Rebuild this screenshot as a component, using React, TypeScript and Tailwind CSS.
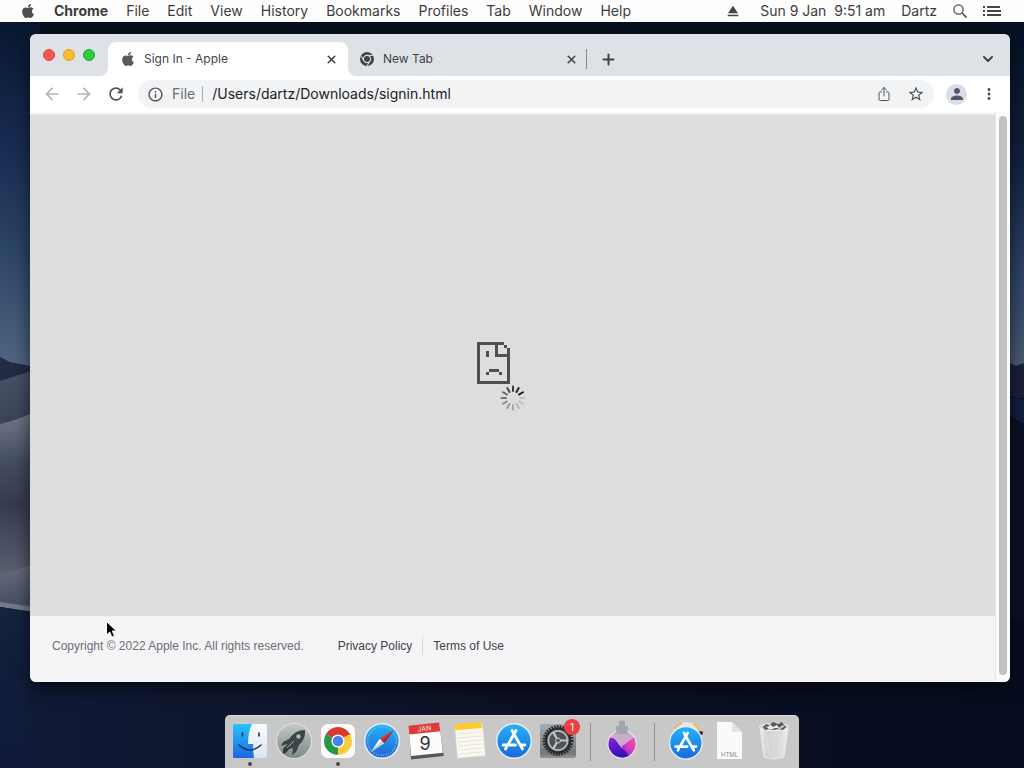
import React from "react";
import { FaApple } from "react-icons/fa";
import { IoShareOutline } from "react-icons/io5";
import { ChevronDown, Plus, X } from "lucide-react";
import {
  MdArrowBack,
  MdArrowForward,
  MdEject,
  MdInfoOutline,
  MdMoreVert,
  MdPerson,
  MdRefresh,
  MdStarBorder,
} from "react-icons/md";

const menus = ["File", "Edit", "View", "History", "Bookmarks", "Profiles", "Tab", "Window", "Help"];

function Wallpaper() {
  return (
    <svg className="absolute inset-0 h-full w-full" viewBox="0 0 1024 768" preserveAspectRatio="none" aria-hidden="true">
      <defs>
        <linearGradient id="skyL" x1="0" y1="0" x2="0" y2="1">
          <stop offset="0" stopColor="#091730" />
          <stop offset="0.35" stopColor="#182b51" />
          <stop offset="0.65" stopColor="#2c4465" />
          <stop offset="1" stopColor="#526783" />
        </linearGradient>
        <linearGradient id="skyR" x1="0" y1="0" x2="0" y2="1">
          <stop offset="0" stopColor="#061022" />
          <stop offset="0.4" stopColor="#12223f" />
          <stop offset="0.75" stopColor="#304669" />
          <stop offset="1" stopColor="#4c5c71" />
        </linearGradient>
        <linearGradient id="dune1" x1="0" y1="0" x2="0" y2="1">
          <stop offset="0" stopColor="#4a5368" />
          <stop offset="1" stopColor="#363d52" />
        </linearGradient>
        <linearGradient id="dune2" x1="0" y1="0" x2="0" y2="1">
          <stop offset="0" stopColor="#727a8b" />
          <stop offset="0.3" stopColor="#444c60" />
          <stop offset="0.55" stopColor="#373b50" />
          <stop offset="1" stopColor="#5c6274" />
        </linearGradient>
        <linearGradient id="dune3" x1="0" y1="0" x2="0" y2="1">
          <stop offset="0" stopColor="#666c7c" />
          <stop offset="1" stopColor="#414960" />
        </linearGradient>
        <linearGradient id="ground" x1="0" y1="0" x2="0" y2="1">
          <stop offset="0" stopColor="#14233f" />
          <stop offset="0.5" stopColor="#111d3a" />
          <stop offset="1" stopColor="#10193a" />
        </linearGradient>
        <linearGradient id="floor" x1="0" y1="0" x2="1" y2="0">
          <stop offset="0" stopColor="#101a35" />
          <stop offset="0.5" stopColor="#0c1024" />
          <stop offset="1" stopColor="#060d20" />
        </linearGradient>
      </defs>
      <rect width="1024" height="768" fill="#07101f" />
      <rect y="22" width="40" height="350" fill="url(#skyL)" />
      <path d="M0 357 L10 362 L30 366 V390 H0 Z" fill="#242b45" />
      <path d="M0 381 Q16 376 34 370 V440 H0 Z" fill="url(#dune1)" />
      <path d="M0 424 Q18 420 34 412 V580 H0 Z" fill="url(#dune2)" />
      <path d="M0 574 L34 565 V614 L0 606 Z" fill="url(#dune3)" />
      <path d="M0 602 L34 607 V612 L0 607 Z" fill="#737b89" />
      <path d="M0 607 L34 612 V768 H0 Z" fill="url(#ground)" />
      <rect x="1000" y="22" width="24" height="350" fill="url(#skyR)" />
      <path d="M1000 358 L1016 366 L1024 363 V410 H1000 Z" fill="#1a203c" />
      <path d="M1000 392 Q1012 399 1024 398 V700 H1000 Z" fill="#0a1024" />
      <path d="M1000 396 L1024 400 V424 L1000 410 Z" fill="#141d40" />
      <rect y="620" x="30" width="994" height="148" fill="url(#floor)" />
    </svg>
  );
}

function MenuBar() {
  return (
    <header className="relative flex h-[22px] items-center justify-between bg-[#fdfdfd] pr-[22px] pl-5 text-sm text-[#3c3c3c]">
      <nav className="flex items-center gap-[18px] leading-[22px]">
        <button aria-label="Apple menu" className="text-[#505050]">
          <FaApple size={16} />
        </button>
        <button className="font-bold">Chrome</button>
        {menus.map((m) => (
          <button key={m}>{m}</button>
        ))}
      </nav>
      <div className="flex items-center gap-4 leading-[22px]">
        <button aria-label="Eject" className="text-[#454545]">
          <MdEject size={18} />
        </button>
        <span className="ml-[2px] whitespace-pre">Sun 9 Jan  9:51 am</span>
        <button>Dartz</button>
        <button aria-label="Search">
          <svg width="14" height="14" viewBox="0 0 14 14" fill="none" stroke="#505050" strokeWidth="1.3">
            <circle cx="5.5" cy="5.5" r="4.6" />
            <path d="M9 9l4.6 4.6" strokeWidth="1.6" />
          </svg>
        </button>
        <button aria-label="Notification Centre">
          <svg width="19" height="12" viewBox="0 0 19 12" fill="#454545" shapeRendering="crispEdges">
            <path d="M0 1h2v2H0zM4 1h13v2H4zM0 5h2v2H0zM4 5h14v2H4zM0 9h2v2H0zM4 9h14v2H4z" />
          </svg>
        </button>
      </div>
    </header>
  );
}

function ChromeFavicon() {
  return (
    <svg width="14" height="14" viewBox="0 0 14 14" aria-hidden="true">
      <circle cx="7" cy="7" r="7" fill="#414549" />
      <circle cx="7" cy="7" r="3.600" fill="none" stroke="#dee1e6" strokeWidth="1.100" />
      <path d="M7 3.400h6.300M10.100 8.800L7 14M3.900 8.800L.8 3.600" stroke="#dee1e6" strokeWidth="1" />
    </svg>
  );
}

function TabStrip() {
  return (
    <div className="flex h-[42px] items-end rounded-t-md bg-[#dee1e6] text-xs text-[#3f4347]">
      <div className="flex h-[42px] w-[78px] shrink-0 items-center gap-2 pl-[13px]">
        <button aria-label="Close window" className="h-3 w-3 rounded-full border border-[#e0443e] bg-[#fb5550]" />
        <button aria-label="Minimise window" className="h-3 w-3 rounded-full border border-[#dea123] bg-[#f6bd2d]" />
        <button aria-label="Zoom window" className="h-3 w-3 rounded-full border border-[#1aab29] bg-[#2bcb42]" />
      </div>
      <div className="relative flex h-[34px] w-60 items-center rounded-t-lg bg-white pr-[10px] pl-3">
        <svg className="absolute bottom-0 -left-2" width="8" height="8" aria-hidden="true">
          <path d="M8 0v8H0a8 8 0 0 0 8-8z" fill="#fff" />
        </svg>
        <svg className="absolute -right-2 bottom-0" width="8" height="8" aria-hidden="true">
          <path d="M0 0v8h8a8 8 0 0 1-8-8z" fill="#fff" />
        </svg>
        <FaApple size={16} className="text-[#5a5a5c]" />
        <button className="ml-2 flex-1 text-left">Sign In - Apple</button>
        <button aria-label="Close Sign In - Apple">
          <X size={13} strokeWidth={3} />
        </button>
      </div>
      <div className="flex h-[34px] w-60 items-center pr-[10px] pl-3">
        <ChromeFavicon />
        <button className="ml-[9px] flex-1 text-left">New Tab</button>
        <button aria-label="Close New Tab">
          <X size={13} strokeWidth={3} />
        </button>
      </div>
      <div className="mb-[7px] -ml-[2px] h-5 w-px bg-[#85898e]" />
      <button aria-label="New tab" className="ml-[13px] flex h-[34px] items-center">
        <Plus size={17} strokeWidth={2.8} />
      </button>
      <button aria-label="Search tabs" className="mr-[14px] ml-auto flex h-[34px] items-center">
        <ChevronDown size={16} strokeWidth={3} />
      </button>
    </div>
  );
}

function Toolbar() {
  return (
    <div className="flex h-9 items-center bg-white pr-3 pl-3 text-[#505458]">
      <div className="flex w-24 shrink-0 items-center gap-3">
        <button aria-label="Back" className="text-[#b5b7b9]">
          <MdArrowBack size={20} />
        </button>
        <button aria-label="Forward" className="text-[#b5b7b9]">
          <MdArrowForward size={20} />
        </button>
        <button aria-label="Reload">
          <MdRefresh size={20} />
        </button>
      </div>
      <div className="flex h-7 flex-1 items-center rounded-full bg-[#f1f3f4] px-[9px] text-sm">
        <MdInfoOutline size={17} />
        <label htmlFor="address" className="ml-2 text-[#6b6f73]">
          File
        </label>
        <span className="ml-[7px] h-4 w-px bg-[#a9acb0]" />
        <input
          id="address"
          defaultValue="/Users/dartz/Downloads/signin.html"
          className="ml-[9px] min-w-0 flex-1 bg-transparent text-[#202124] outline-none"
        />
        <button aria-label="Share">
          <IoShareOutline size={16} />
        </button>
        <button aria-label="Bookmark this page" className="ml-[15px]">
          <MdStarBorder size={18} />
        </button>
      </div>
      <button
        aria-label="Profile"
        className="ml-3 flex h-[21px] w-[21px] items-center justify-center rounded-full bg-[#dadde6] text-[#50566a]"
      >
        <MdPerson size={18} />
      </button>
      <button aria-label="Chrome menu" className="ml-[13px]">
        <MdMoreVert size={18} />
      </button>
    </div>
  );
}

function SadPage() {
  return (
    <svg width="33" height="42" viewBox="0 0 33 42" fill="#4f4f4f" shapeRendering="crispEdges" role="img" aria-label="Page failed to load">
      <path d="M0 0h27v3H3v36h27V6h3v36H0z" />
      <path d="M18 3h3v9h9v3H18zM27 3h3v3h-3zM9 9h3v6H9zM12 27h10v3H12zM9 30h3v3H9zM22 30h3v3h-3z" />
    </svg>
  );
}

const spokes = [0.8, 0.9, 1, 0.12, 0.14, 0.2, 0.26, 0.32, 0.4, 0.5, 0.6, 0.72];

function Spinner() {
  return (
    <svg className="absolute top-[43px] left-[23px]" width="26" height="26" viewBox="-13 -13 26 26" stroke="#111" strokeWidth="2" strokeLinecap="round" aria-label="Loading">
      {spokes.map((o, i) => (
        <path key={i} d="M0-7V-11.5" opacity={o} transform={`rotate(${i * 30})`} />
      ))}
    </svg>
  );
}

function BrowserWindow() {
  return (
    <main className="relative mt-3 mr-[14px] mb-[33px] ml-[30px] flex flex-1 flex-col overflow-hidden rounded-md bg-white shadow-[0_6px_18px_rgba(0,0,0,0.6)]">
      <TabStrip />
      <Toolbar />
      <div className="flex flex-1">
        <div className="flex flex-1 flex-col">
          <section className="flex flex-1 items-center justify-center bg-linear-to-b from-white to-[#dddddd] to-[4px] pb-[2px]">
            <div className="relative mr-[39px]">
              <SadPage />
              <Spinner />
            </div>
          </section>
          <footer className="flex h-[66px] items-center bg-[#f5f5f7] pb-[6px] pl-[22px] font-['Liberation_Sans',sans-serif] text-[12px] text-[#6e6e73]">
            <span>Copyright © 2022 Apple Inc. All rights reserved.</span>
            <a href="#privacy" className="ml-[34px] border-r border-[#d6d6da] pr-[10px] text-[#424245]">
              Privacy Policy
            </a>
            <a href="#terms" className="ml-[10px] text-[#424245]">
              Terms of Use
            </a>
          </footer>
        </div>
        <div className="flex w-[15px] border-l border-[#e8e8e8] bg-[#fbfbfb] pt-1 pb-[7px] pl-[3px]">
          <div className="w-2 rounded-full bg-[#c1c2c2]" />
        </div>
      </div>
    </main>
  );
}

function Finder() {
  return (
    <svg width="36" height="36" viewBox="0 0 36 36">
      <defs>
        <linearGradient id="fi" x1="0" y1="0" x2="0" y2="1">
          <stop offset="0" stopColor="#29c4fb" />
          <stop offset="1" stopColor="#1b67e0" />
        </linearGradient>
        <linearGradient id="fw" x1="0" y1="0" x2="0" y2="1">
          <stop offset="0" stopColor="#fafbfd" />
          <stop offset="1" stopColor="#dbe4f2" />
        </linearGradient>
      </defs>
      <rect x="1" y="1" width="34" height="34" rx="1" fill="url(#fi)" />
      <path d="M20 1h14a1 1 0 0 1 1 1v32a1 1 0 0 1-1 1H22q-1-6-.8-14H16Q16 9 20 1z" fill="url(#fw)" />
      <path d="M10.500 10v3M27 10v3" stroke="#163252" strokeWidth="1.6" strokeLinecap="round" />
      <path d="M7 22q11 10 22 0" fill="none" stroke="#173250" strokeWidth="1.5" strokeLinecap="round" />
    </svg>
  );
}

function Launchpad() {
  return (
    <svg width="38" height="38" viewBox="0 0 38 38">
      <defs>
        <linearGradient id="lp" x1="0" y1="0" x2="0" y2="1">
          <stop offset="0" stopColor="#c2cac9" />
          <stop offset="1" stopColor="#7c8888" />
        </linearGradient>
      </defs>
      <circle cx="19" cy="19" r="17.500" fill="url(#lp)" stroke="#dce0df" strokeWidth="1.200" />
      <path d="M30 8Q20 8 14 17L8 20l-2 4 7-2 5 5-1 6 4-3 3-7Q31 17 30 8z" fill="#3b4546" />
      <circle cx="23.500" cy="14.500" r="2.200" fill="#aeb8b7" />
      <path d="M11 24q-4 2-3 8 4-1 6-5l3-1-4-4z" fill="#2f393a" />
      <path d="M12 26l7-7" stroke="#aab3b3" />
    </svg>
  );
}

function ChromeIcon() {
  return (
    <svg width="36" height="36" viewBox="0 0 36 36">
      <rect x="1" y="1" width="34" height="34" rx="7" fill="#fbfbfb" />
      <path d="M18 18L5.880 11A14 14 0 0 1 30.120 11z" fill="#d93a2f" />
      <path d="M18 18L30.120 11A14 14 0 0 1 18 32z" fill="#fbcb36" />
      <path d="M18 18V32A14 14 0 0 1 5.880 11z" fill="#27984a" />
      <path d="M18 11.500h12.400l-.3-.5L18 10z" fill="#d93a2f" />
      <path d="M23.600 21.250L17.400 32h.6l8-8z" fill="#fbcb36" />
      <path d="M12.400 21.250L6 10.800l-.3.700 3 9z" fill="#27984a" />
      <circle cx="18" cy="18" r="6.600" fill="#fff" />
      <circle cx="18" cy="18" r="5.200" fill="#4a80eb" />
    </svg>
  );
}

function Safari() {
  return (
    <svg width="38" height="38" viewBox="0 0 38 38">
      <defs>
        <linearGradient id="sf" x1="0" y1="0" x2="0" y2="1">
          <stop offset="0" stopColor="#21b6f5" />
          <stop offset="1" stopColor="#2465d6" />
        </linearGradient>
      </defs>
      <circle cx="19" cy="19" r="17.300" fill="url(#sf)" stroke="#e9edf0" strokeWidth="1.500" />
      <circle cx="19" cy="19" r="14.300" fill="none" stroke="#9fd6f8" strokeWidth="1.500" strokeDasharray="0.7 1.8" />
      <path d="M31 8L16.700 16.700 19 19z" fill="#ed302b" />
      <path d="M31 8L19 19l2.300 2.300z" fill="#b31e2c" />
      <path d="M8 30l8.700-13.300L19 19z" fill="#fff" />
      <path d="M8 30l11-11 2.300 2.300z" fill="#d2d8df" />
    </svg>
  );
}

function Calendar() {
  return (
    <svg width="38" height="38" viewBox="0 0 38 38">
      <g transform="rotate(-6 18 18)">
        <path d="M3 10L2 36h33l-1-26z" fill="#55575a" />
        <path d="M3 3h31l.5 29.500h-32z" fill="#fcfcfc" />
        <path d="M3 2h31v9H3z" fill="#dc3b3a" />
        <text x="18.500" y="9" fontSize="7" textAnchor="middle" fill="#fbe4e4" fontFamily="Inter, sans-serif">JAN</text>
      </g>
      <text x="18" y="28" fontSize="18" textAnchor="middle" fill="#303030" fontFamily="Inter, sans-serif">9</text>
    </svg>
  );
}

function Notes() {
  return (
    <svg width="38" height="38" viewBox="0 0 38 38">
      <g transform="rotate(-5 19 19)">
        <rect x="5" y="2" width="28" height="33" fill="#fbf9ef" stroke="#d8d5c9" strokeWidth="0.600" />
        <path d="M5 1h27v6H5z" fill="#fccd2c" />
        <path d="M7 11h24M7 15h24M7 19h24M7 23h24M7 27h24M7 31h24" stroke="#e4e0d5" strokeWidth="0.800" />
      </g>
    </svg>
  );
}

function AppStoreGlyph() {
  return (
    <g fill="none" stroke="#fff" strokeWidth="2.800" strokeLinecap="round">
      <path d="M17 8.500l10.500 18.500M21 8.500L13 22.500M11.500 25.200l-1 1.800" />
      <path d="M8 23h12.500M26 23h4" />
    </g>
  );
}

function AppStore({ download = false }: { download?: boolean }) {
  return (
    <svg width="38" height="38" viewBox="0 0 38 38">
      <defs>
        <linearGradient id="as" x1="0" y1="0" x2="0" y2="1">
          <stop offset="0" stopColor="#24b3f8" />
          <stop offset="1" stopColor="#1968dc" />
        </linearGradient>
      </defs>
      {download && (
        <g>
          <path d="M6 7Q10 0 19 0t13 7l-4 5H8z" fill="#efe6da" />
          <path d="M7 7Q10 3 15 1" stroke="#efa45b" strokeWidth="1.500" fill="none" />
          <path d="M26 2q5 2 6 7" stroke="#e8c24d" strokeWidth="2" fill="none" />
          <circle cx="34" cy="11" r="2" fill="#3d3333" />
        </g>
      )}
      <g transform={download ? "translate(1 3) scale(0.940)" : undefined}>
        <circle cx="19" cy="19" r="17.300" fill="url(#as)" stroke="#e6edf4" strokeWidth="1.500" />
        <AppStoreGlyph />
      </g>
    </svg>
  );
}

function Settings() {
  return (
    <svg width="38" height="38" viewBox="0 0 38 38">
      <defs>
        <linearGradient id="st" x1="0" y1="0" x2="0" y2="1">
          <stop offset="0" stopColor="#a7abad" />
          <stop offset="0.850" stopColor="#73777a" />
          <stop offset="1" stopColor="#92969a" />
        </linearGradient>
      </defs>
      <rect x="1" y="2" width="36" height="34" rx="2" fill="url(#st)" />
      <circle cx="19" cy="18.500" r="14" fill="none" stroke="#292c2e" strokeWidth="3" strokeDasharray="1.700 1.100" />
      <circle cx="19" cy="18.500" r="12" fill="#8d9193" stroke="#292c2e" strokeWidth="2.500" />
      <circle cx="19" cy="18.500" r="9.500" fill="#4e5254" stroke="#b8bdbf" strokeWidth="1.500" />
      <path d="M19 18.500h9.500M19 18.500l-4.700-8.200M19 18.500l-4.700 8.200" stroke="#c3c8ca" strokeWidth="2.200" />
      <circle cx="19" cy="18.500" r="2.500" fill="#5a5f61" stroke="#c3c8ca" />
    </svg>
  );
}

function Monterey() {
  return (
    <svg width="38" height="44" viewBox="0 0 38 44">
      <defs>
        <linearGradient id="ms" x1="0" y1="0" x2="1" y2="1">
          <stop offset="0" stopColor="#b9aecb" />
          <stop offset="1" stopColor="#e5a6cf" />
        </linearGradient>
        <linearGradient id="mp" x1="0" y1="0" x2="0.4" y2="1">
          <stop offset="0" stopColor="#8d22c4" />
          <stop offset="0.5" stopColor="#5a18d0" />
          <stop offset="1" stopColor="#3012a8" />
        </linearGradient>
        <linearGradient id="mr" x1="1" y1="0" x2="0.2" y2="1">
          <stop offset="0" stopColor="#f0569c" />
          <stop offset="0.6" stopColor="#d63cc0" />
          <stop offset="1" stopColor="#6a1fd8" />
        </linearGradient>
        <clipPath id="mc">
          <circle cx="19" cy="25" r="13.500" />
        </clipPath>
      </defs>
      <circle cx="19" cy="25" r="14.500" fill="#ecebf1" />
      <g clipPath="url(#mc)">
        <rect x="5" y="11" width="28" height="28" fill="url(#ms)" />
        <path d="M19 27L33 17v22H19z" fill="url(#mr)" />
        <path d="M5 19q6-1 9 4 4 6 9 10l5 7H5z" fill="url(#mp)" />
      </g>
      <path d="M16 2q3-1 6 0v5h3v5l-2 3h-8l-2-3V7h3z" fill="#a0a7ad" />
    </svg>
  );
}

function HtmlFile() {
  return (
    <svg width="28" height="38" viewBox="0 0 28 38">
      <path d="M1 0h15l10 10v27H1z" fill="#fafafa" />
      <path d="M16 0q1 7-1 10 6-1 11 0z" fill="#e2e2e2" />
      <text x="13.500" y="34.500" fontSize="6" textAnchor="middle" fill="#8a8a8a" fontFamily="Inter, sans-serif">HTML</text>
    </svg>
  );
}

function Trash() {
  return (
    <svg width="34" height="40" viewBox="0 0 34 40">
      <defs>
        <linearGradient id="tr" x1="0" y1="0" x2="1" y2="0">
          <stop offset="0" stopColor="#efefef" />
          <stop offset="0.250" stopColor="#d3d3d3" />
          <stop offset="0.750" stopColor="#dcdcdc" />
          <stop offset="1" stopColor="#f2f2f2" />
        </linearGradient>
      </defs>
      <path d="M3 7l4 29q10 4 20 0l4-29z" fill="url(#tr)" stroke="#eeeeee" strokeWidth="0.800" />
      <ellipse cx="17" cy="6" rx="14.500" ry="3.500" fill="#c9c9c9" stroke="#f6f6f6" />
      <path d="M6 6l3-3 3 1 4-3 5 2 4-2 2 3 2 2-3 3-5-1-4 1-5-1-4 1z" fill="#5a5a5a" />
      <path d="M8 5l3 1 2-3 3 3 4-2 2 3 4-3 1 2-4 1-5 0-6 1zM12 8l3-1 3 1zM20 8l3-1 2 1z" fill="#ececec" />
      <path d="M10 16l2 17M24 16l-2 17" stroke="#ececec" strokeWidth="1.200" opacity="0.500" />
    </svg>
  );
}

function DockItem({ name, running, badge, children }: { name: string; running?: boolean; badge?: string; children: React.ReactNode }) {
  return (
    <button aria-label={name} className="relative flex h-[52px] w-11 items-center justify-center pb-[2px]">
      {children}
      {badge && (
        <span className="absolute top-[3px] right-0 flex h-4 w-4 items-center justify-center rounded-full bg-[#ed3f40] text-[10px] text-white">
          {badge}
        </span>
      )}
      {running && <span className="absolute bottom-[2px] h-1 w-1 rounded-full bg-[#484848]" />}
    </button>
  );
}

function Divider() {
  return (
    <div className="flex w-5 justify-center">
      <div className="h-[38px] w-px bg-[#8f8f8f]" />
    </div>
  );
}

function Dock() {
  return (
    <nav aria-label="Dock" className="relative mx-auto flex items-center rounded-t-[5px] border-t border-[#dadada] bg-[#c8c8c9] px-[3px]">
      <DockItem name="Finder" running><Finder /></DockItem>
      <DockItem name="Launchpad"><Launchpad /></DockItem>
      <DockItem name="Google Chrome" running><ChromeIcon /></DockItem>
      <DockItem name="Safari"><Safari /></DockItem>
      <DockItem name="Calendar"><Calendar /></DockItem>
      <DockItem name="Notes"><Notes /></DockItem>
      <DockItem name="App Store"><AppStore /></DockItem>
      <DockItem name="System Preferences" badge="1"><Settings /></DockItem>
      <Divider />
      <DockItem name="Install macOS Monterey"><Monterey /></DockItem>
      <Divider />
      <DockItem name="Applications"><AppStore download /></DockItem>
      <DockItem name="Downloads"><HtmlFile /></DockItem>
      <DockItem name="Trash"><Trash /></DockItem>
    </nav>
  );
}

export default function App() {
  return (
    <div className="relative flex min-h-screen flex-col overflow-hidden bg-[#07101f] font-['Inter',sans-serif]">
      <Wallpaper />
      <MenuBar />
      <BrowserWindow />
      <Dock />
      <svg className="absolute top-[620px] left-[105px]" width="13" height="19" viewBox="0 0 13 19" aria-hidden="true">
        <path d="M1.500 1.500v13.500l3.200-3 2.200 5 2.600-1.100-2.200-4.900h4.200z" fill="#000" stroke="#fff" strokeWidth="1" />
      </svg>
    </div>
  );
}
